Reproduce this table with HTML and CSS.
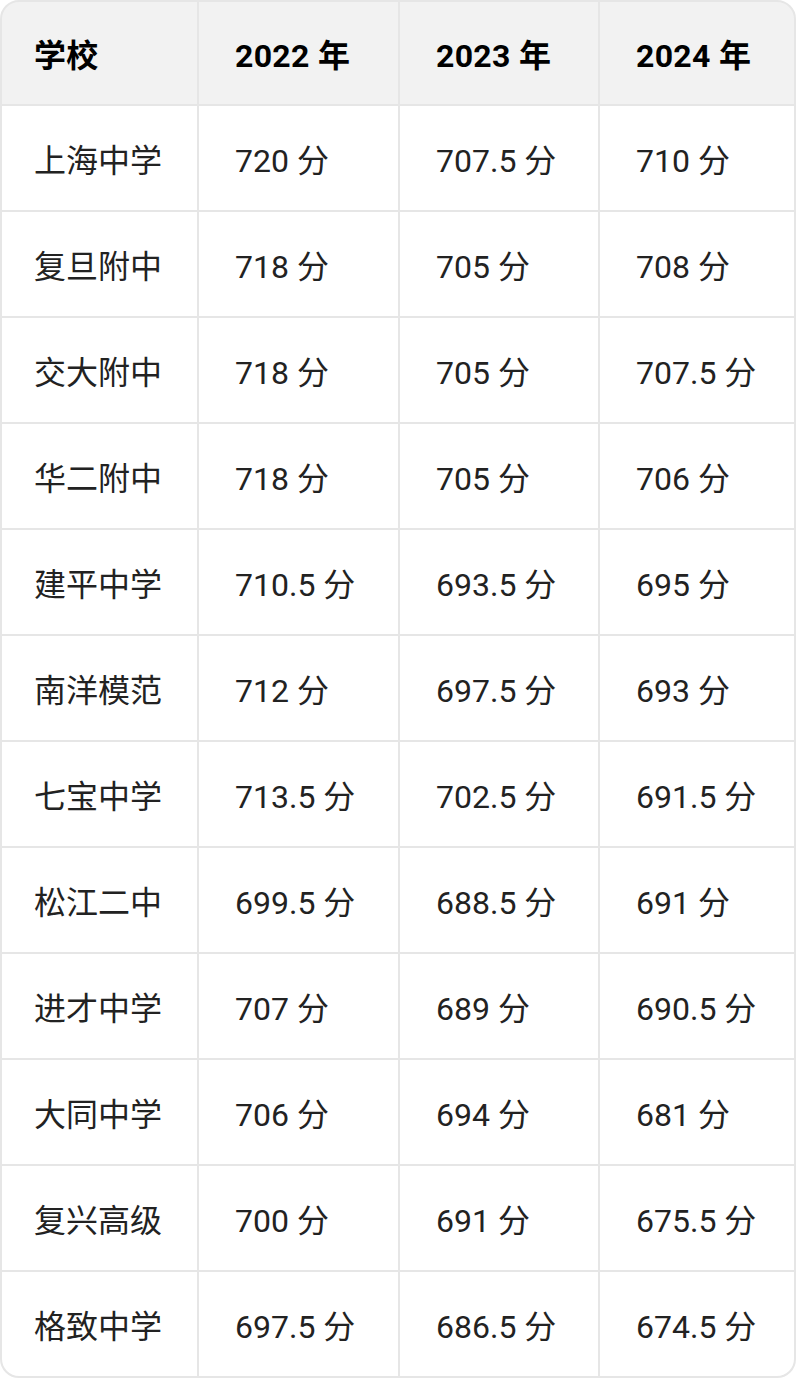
FILE: index.html
```html
<!DOCTYPE html>
<html lang="zh-CN">
<head>
<meta charset="utf-8">
<title>学校分数线</title>
<link rel="stylesheet" href="styles.css">
</head>
<body>
<div class="table">
  <div class="cell head name">学校</div>
  <div class="cell head">2022 年</div>
  <div class="cell head">2023 年</div>
  <div class="cell head">2024 年</div>

  <div class="cell name">上海中学</div><div class="cell">720 分</div><div class="cell">707.5 分</div><div class="cell">710 分</div>
  <div class="cell name">复旦附中</div><div class="cell">718 分</div><div class="cell">705 分</div><div class="cell">708 分</div>
  <div class="cell name">交大附中</div><div class="cell">718 分</div><div class="cell">705 分</div><div class="cell">707.5 分</div>
  <div class="cell name">华二附中</div><div class="cell">718 分</div><div class="cell">705 分</div><div class="cell">706 分</div>
  <div class="cell name">建平中学</div><div class="cell">710.5 分</div><div class="cell">693.5 分</div><div class="cell">695 分</div>
  <div class="cell name">南洋模范</div><div class="cell">712 分</div><div class="cell">697.5 分</div><div class="cell">693 分</div>
  <div class="cell name">七宝中学</div><div class="cell">713.5 分</div><div class="cell">702.5 分</div><div class="cell">691.5 分</div>
  <div class="cell name">松江二中</div><div class="cell">699.5 分</div><div class="cell">688.5 分</div><div class="cell">691 分</div>
  <div class="cell name">进才中学</div><div class="cell">707 分</div><div class="cell">689 分</div><div class="cell">690.5 分</div>
  <div class="cell name">大同中学</div><div class="cell">706 分</div><div class="cell">694 分</div><div class="cell">681 分</div>
  <div class="cell name">复兴高级</div><div class="cell">700 分</div><div class="cell">691 分</div><div class="cell">675.5 分</div>
  <div class="cell name">格致中学</div><div class="cell">697.5 分</div><div class="cell">686.5 分</div><div class="cell">674.5 分</div>
</div>
</body>
</html>
```

FILE: styles.css
```css
html, body {
  margin: 0;
  padding: 0;
  background: #ffffff;
}

.table {
  display: grid;
  grid-template-columns: 195px 199px 198px 194px;
  grid-template-rows: 102px repeat(12, 104px);
  gap: 2px;
  background: #e6e6e6;
  border: 2px solid #e6e6e6;
  border-radius: 19px;
  overflow: hidden;
  width: 792px;
  font-family: Roboto, "Noto Sans CJK SC", sans-serif;
}

.cell {
  display: flex;
  align-items: center;
  padding-left: 36px;
  background: #ffffff;
  color: #222222;
  font-size: 32px;
  white-space: nowrap;
}

.cell.name {
  padding-left: 32px;
}

.head {
  background: #f2f2f2;
  color: #000000;
  font-weight: 700;
  letter-spacing: 0.3px;
}
```
